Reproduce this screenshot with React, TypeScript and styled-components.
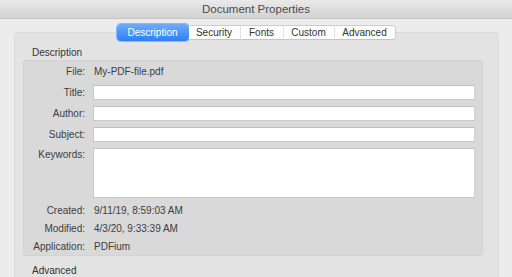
import React from 'react';
import styled, { createGlobalStyle } from 'styled-components';

const GlobalStyle = createGlobalStyle`
  html, body {
    margin: 0;
    padding: 0;
    background: #ececec;
  }
  body {
    font-family: "Liberation Sans", Arial, sans-serif;
    font-size: 10px;
    color: #3b3b3b;
  }
`;

const Window = styled.div`
  width: 512px;
  height: 277px;
  overflow: hidden;
  background: #ececec;
  display: flex;
  flex-direction: column;
`;

const TitleBar = styled.div`
  height: 18px;
  flex-shrink: 0;
  border-bottom: 1px solid #c4c4c4;
  background: linear-gradient(#e9e9e9, #d3d3d3);
  display: flex;
  align-items: center;
  justify-content: center;
  font-size: 11.5px;
  color: #4b4b4b;
`;

const Content = styled.div`
  padding: 5px 13px 0 14px;
  display: flex;
  flex-direction: column;
  flex: 1;
`;

const TabBar = styled.div`
  align-self: center;
  display: flex;
  align-items: center;
  height: 17px;
  margin-bottom: -9px;
  margin-left: -1px;
  position: relative;
  z-index: 1;
`;

const Tab = styled.div<{ $active?: boolean; $last?: boolean; $w: number }>`
  box-sizing: border-box;
  width: ${({ $w }) => $w}px;
  display: flex;
  align-items: center;
  justify-content: center;
  white-space: nowrap;
  ${({ $active, $last }) =>
    $active
      ? `
    height: 17px;
    color: #fff;
    border-radius: 4px;
    background: linear-gradient(#6eabfb, #2f7ff6);
    box-shadow: 0 0 0 1px #8ab7f5;
  `
      : `
    height: 15px;
    color: #333;
    background: #fff;
    border-top: 1px solid #cdcdcd;
    border-bottom: 1px solid #c4c4c4;
    border-right: 1px solid #e2e2e2;
    ${$last ? 'border-right-color: #cdcdcd; border-radius: 0 4px 4px 0;' : ''}
  `}
`;

const Box = styled.div`
  flex: 1;
  background: #e3e3e3;
  border: 1px solid #dbdbdb;
  border-bottom: none;
  border-radius: 4px 4px 0 0;
  padding: 13px 15px 0 8px;
  display: flex;
  flex-direction: column;
`;

const SectionLabel = styled.div<{ $gap?: number }>`
  line-height: 14px;
  margin: ${({ $gap }) => $gap || 0}px 0 0 9px;
  color: #333;
`;

const Group = styled.div`
  background: #d9d9d9;
  border: 1px solid #d3d3d3;
  border-radius: 3px;
  padding: 4px 7px 1px 8px;
  display: flex;
  flex-direction: column;
`;

const Rows = styled.div<{ $gap: number }>`
  display: grid;
  grid-template-columns: 53px 1fr;
  column-gap: 8px;
  row-gap: ${({ $gap }) => $gap}px;
  align-items: center;
  & + & {
    margin-top: 6px;
  }
`;

const Label = styled.div<{ $top?: boolean }>`
  text-align: right;
  line-height: 14px;
  align-self: ${({ $top }) => ($top ? 'start' : 'center')};
  color: #3d3d3d;
`;

const Value = styled.div`
  line-height: 14px;
  padding-left: 1px;
  color: #3d3d3d;
`;

const Field = styled.div<{ $tall?: boolean }>`
  box-sizing: border-box;
  height: ${({ $tall }) => ($tall ? 50 : 15)}px;
  background: #fff;
  border: 1px solid #cacaca;
  border-top-color: #c0c0c0;
  border-right-color: #d2d2d2;
`;

const tabs = [
  { name: 'Description', w: 72 },
  { name: 'Security', w: 52 },
  { name: 'Fonts', w: 43 },
  { name: 'Custom', w: 51 },
  { name: 'Advanced', w: 61 },
];

const fields = [
  { label: 'Title:' },
  { label: 'Author:' },
  { label: 'Subject:' },
  { label: 'Keywords:', tall: true },
];

const info = [
  { label: 'Created:', value: '9/11/19, 8:59:03 AM' },
  { label: 'Modified:', value: '4/3/20, 9:33:39 AM' },
  { label: 'Application:', value: 'PDFium' },
];

const App = () => (
  <>
    <GlobalStyle />
    <Window>
      <TitleBar>Document Properties</TitleBar>
      <Content>
        <TabBar>
          {tabs.map((t, i) => (
            <Tab key={t.name} $w={t.w} $active={i === 0} $last={i === tabs.length - 1}>
              {t.name}
            </Tab>
          ))}
        </TabBar>
        <Box>
          <SectionLabel>Description</SectionLabel>
          <Group>
            <Rows $gap={6}>
              <Label>File:</Label>
              <Value>My-PDF-file.pdf</Value>
              {fields.map((f) => (
                <React.Fragment key={f.label}>
                  <Label $top={f.tall}>{f.label}</Label>
                  <Field $tall={f.tall} />
                </React.Fragment>
              ))}
            </Rows>
            <Rows $gap={4}>
              {info.map((r) => (
                <React.Fragment key={r.label}>
                  <Label>{r.label}</Label>
                  <Value>{r.value}</Value>
                </React.Fragment>
              ))}
            </Rows>
          </Group>
          <SectionLabel $gap={8}>Advanced</SectionLabel>
        </Box>
      </Content>
    </Window>
  </>
);

export default App;
